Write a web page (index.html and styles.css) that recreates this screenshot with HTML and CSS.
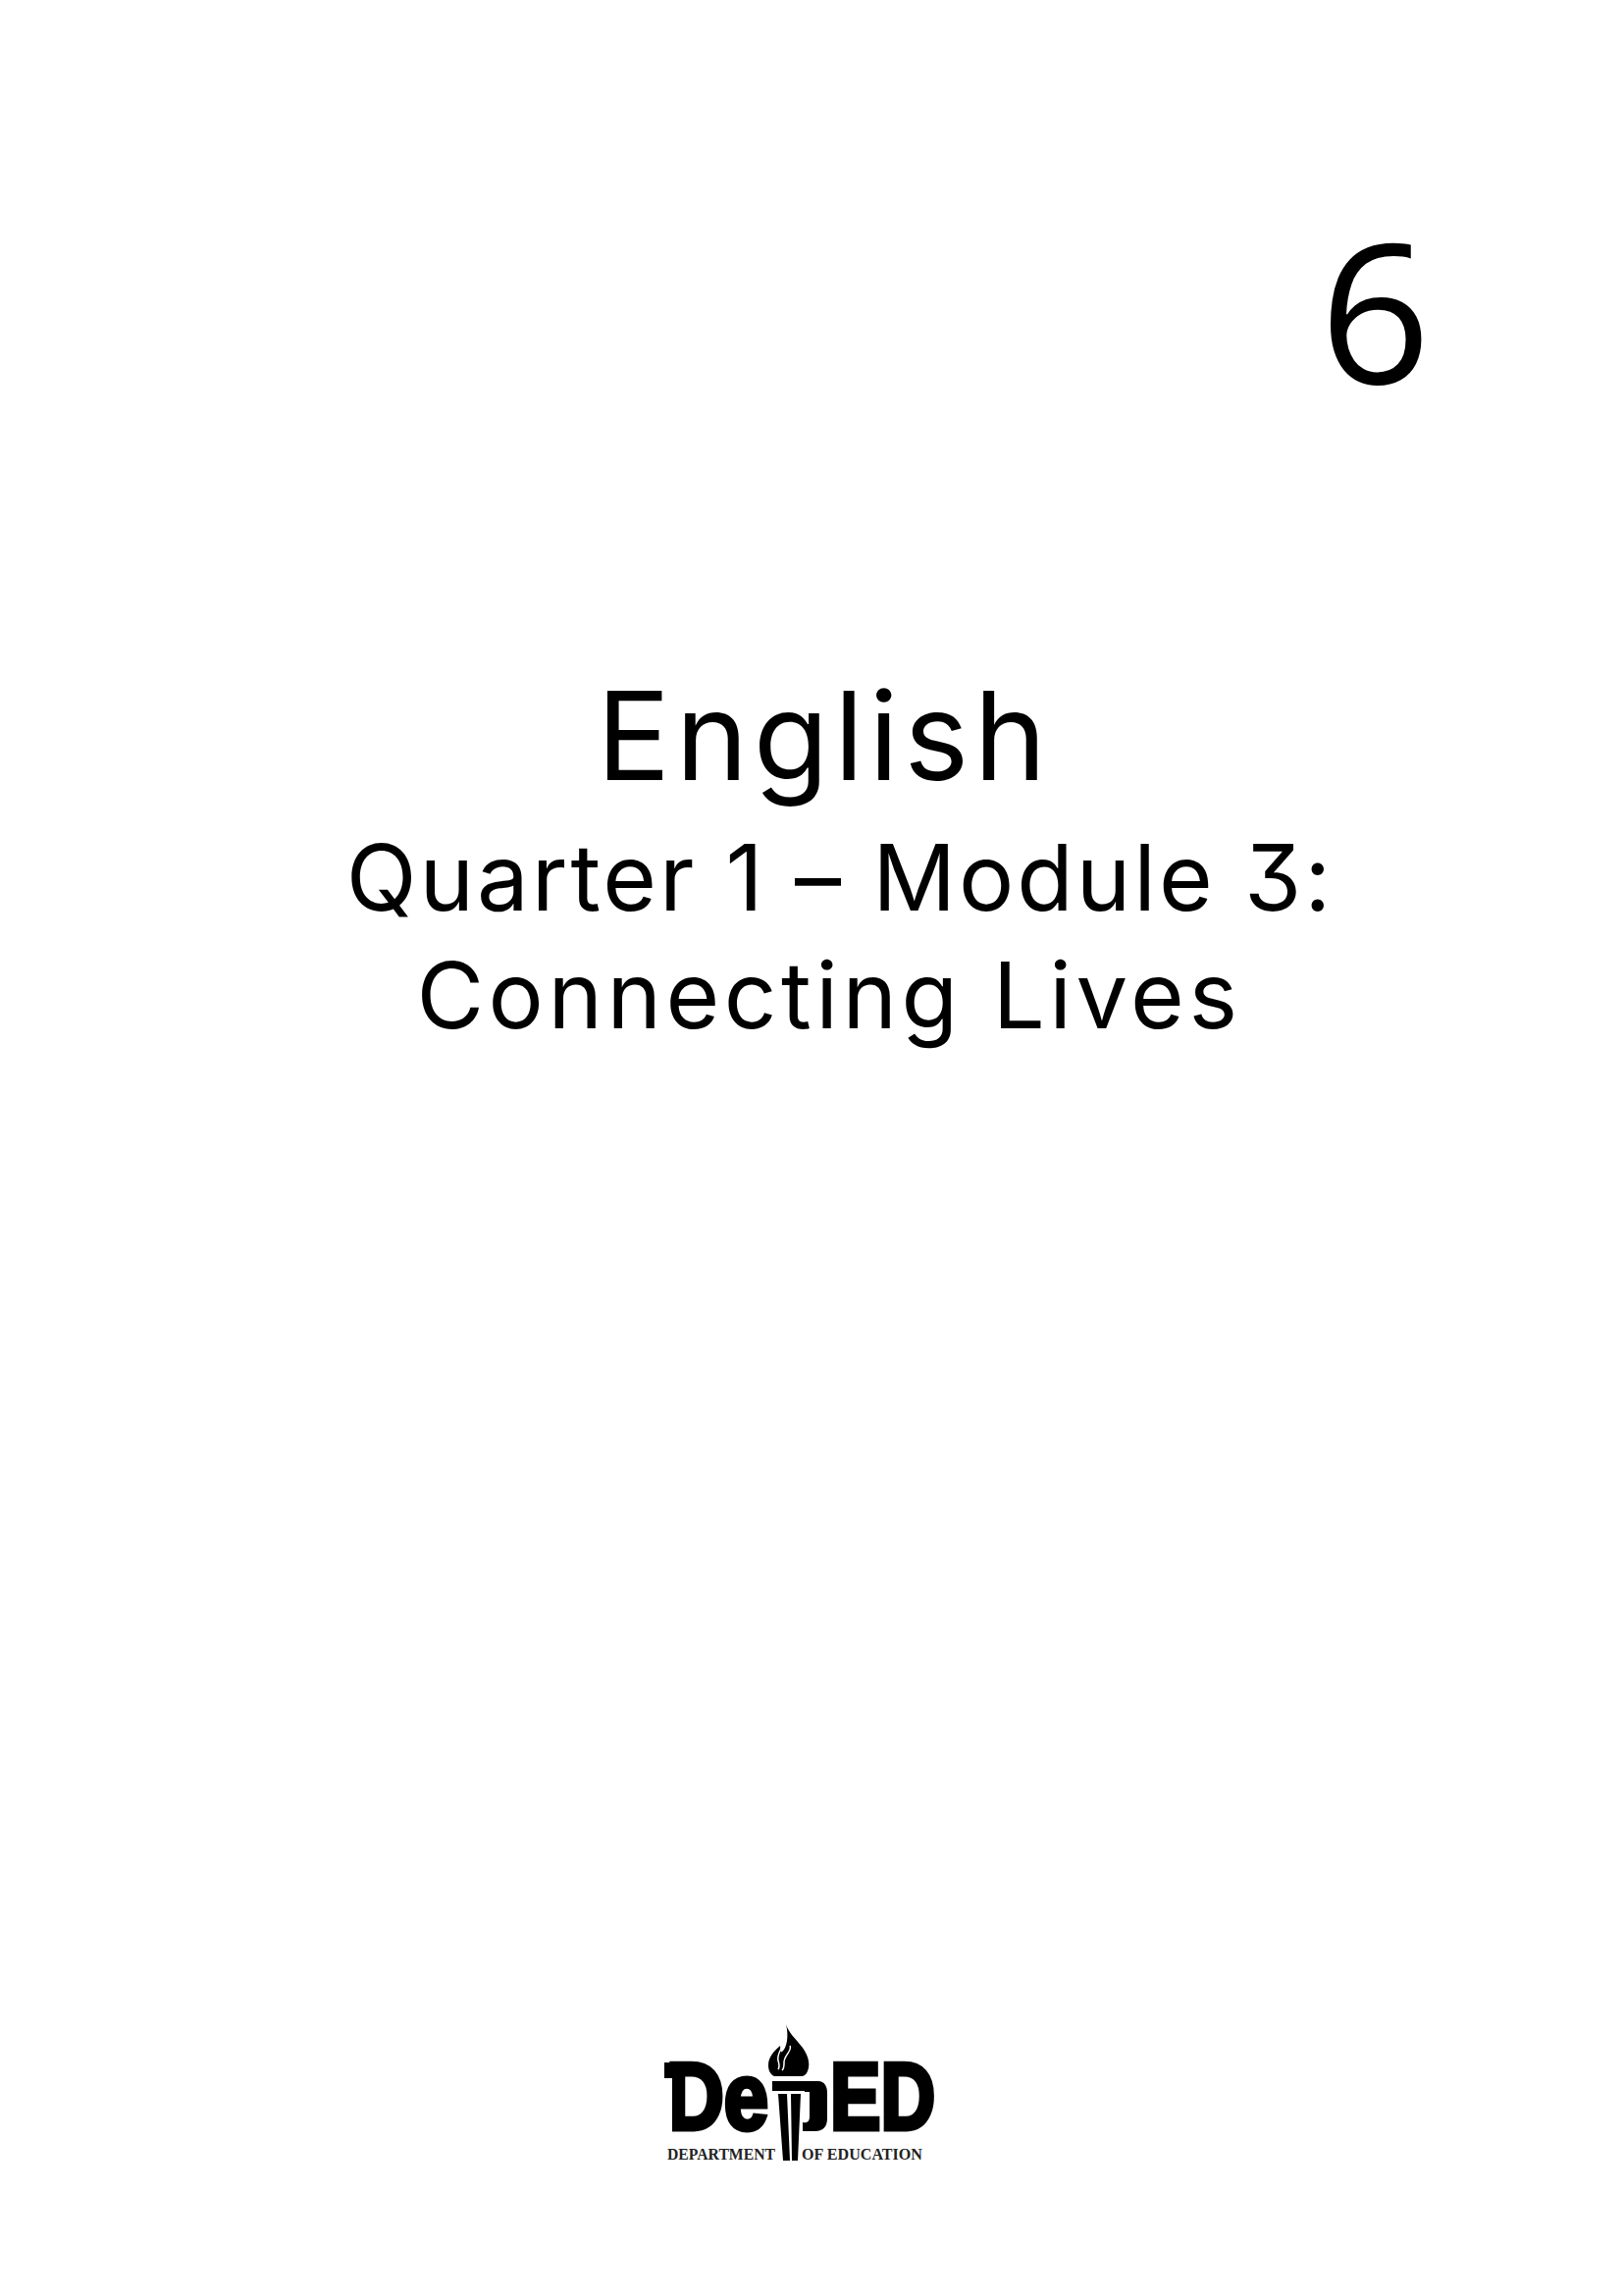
FILE: index.html
```html
<!DOCTYPE html>
<html lang="en">
<head>
<meta charset="UTF-8">
<meta name="viewport" content="width=device-width, initial-scale=1.0">
<title>English 6 - Quarter 1 Module 3</title>
<link rel="stylesheet" href="styles.css">
</head>
<body>
<div class="page">
  <div class="grade">6</div>

  <div class="titles">
    <h1 class="subject">English</h1>
    <h2 class="quarter">Quarter 1 – Module 3:</h2>
    <h2 class="lesson">Connecting Lives</h2>
  </div>

  <div class="footer">
    <svg class="logo" viewBox="0 0 320 170" role="img" aria-label="DepED Department of Education">
      <!-- big letters -->
      <text class="logo-big" x="19" y="120" textLength="104" lengthAdjust="spacingAndGlyphs">De</text>
      <text class="logo-big" x="186" y="120" textLength="107" lengthAdjust="spacingAndGlyphs">ED</text>
      <!-- notch in the first D -->
      <path class="logo-cut" d="M12 68h13v56H12z"/>
      <rect class="logo-fill" x="17" y="52" width="20" height="16"/>
      <!-- p bowl behind the torch -->
      <path class="logo-fill" d="M160 71h14c6 0 9 5 9 12v26c0 8-4 13-12 13h-13v-9c5 1 7-1 7-6V82h-5z"/>
      <!-- torch -->
      <path class="logo-fill" d="M141 13c2 8 10 15 17 24 7 10 8 19 4 26-1 1-3 3-5 3h-28c-4-2-6-6-6-11 0-8 5-14 12-20 1 5 0 7 2 6 5-4 7-16 4-28z"/>
      <path class="logo-gap" d="M137 30c3 6-6 12-4 20 1 4 2 6 0 9M145 35c3 5-7 10-6 18 0 3 0 5-2 7"/>
      <rect class="logo-fill" x="127" y="71" width="38" height="10"/>
      <path class="logo-fill" d="M133 84h9l3 68h-7z M146 84h10l-3 68h-6z"/>
      <!-- small caption -->
      <text class="logo-small" x="20" y="151" textLength="110" lengthAdjust="spacingAndGlyphs">DEPARTMENT</text>
      <text class="logo-small" x="157" y="151" textLength="123" lengthAdjust="spacingAndGlyphs">OF EDUCATION</text>
    </svg>
  </div>
</div>
</body>
</html>
```

FILE: styles.css
```css
html, body {
    margin: 0;
    padding: 0;
    background: #fff;
}

.page {
    width: 1655px;
    height: 2340px;
    color: #000;
    display: flex;
    flex-direction: column;
    overflow: hidden;
}

.grade {
    font-family: "Open Sans", sans-serif;
    font-size: 198px;
    line-height: 200px;
    text-align: right;
    padding-top: 214px;
    padding-right: 197px;
}

.titles {
    font-family: Inter, sans-serif;
    font-feature-settings: "cv09";
    text-align: center;
    padding-top: 251px;
}

.subject, .quarter, .lesson {
    margin: 0;
    font-weight: 400;
}

.subject {
    font-size: 125px;
    line-height: 169px;
    letter-spacing: 5.4px;
    padding-left: 25px;
}

.quarter, .lesson {
    font-size: 94px;
    line-height: 120px;
}

.quarter {
    letter-spacing: 2.9px;
    padding-left: 57px;
}

.lesson {
    letter-spacing: 4.5px;
    padding-left: 35px;
}

.footer {
    margin-top: auto;
    padding-bottom: 120px;
    padding-left: 660px;
}

.logo {
    display: block;
    width: 320px;
    height: 170px;
}

.logo-big {
    font-family: "Liberation Sans", sans-serif;
    font-weight: 700;
    font-size: 96px;
    stroke: #000;
    stroke-width: 5px;
}

.logo-fill {
    fill: #000;
}

.logo-cut {
    fill: #fff;
}

.logo-gap {
    fill: none;
    stroke: #fff;
    stroke-width: 1.5;
}

.logo-small {
    font-family: "Liberation Serif", serif;
    font-weight: 700;
    font-size: 17px;
    fill: #222;
}
```
